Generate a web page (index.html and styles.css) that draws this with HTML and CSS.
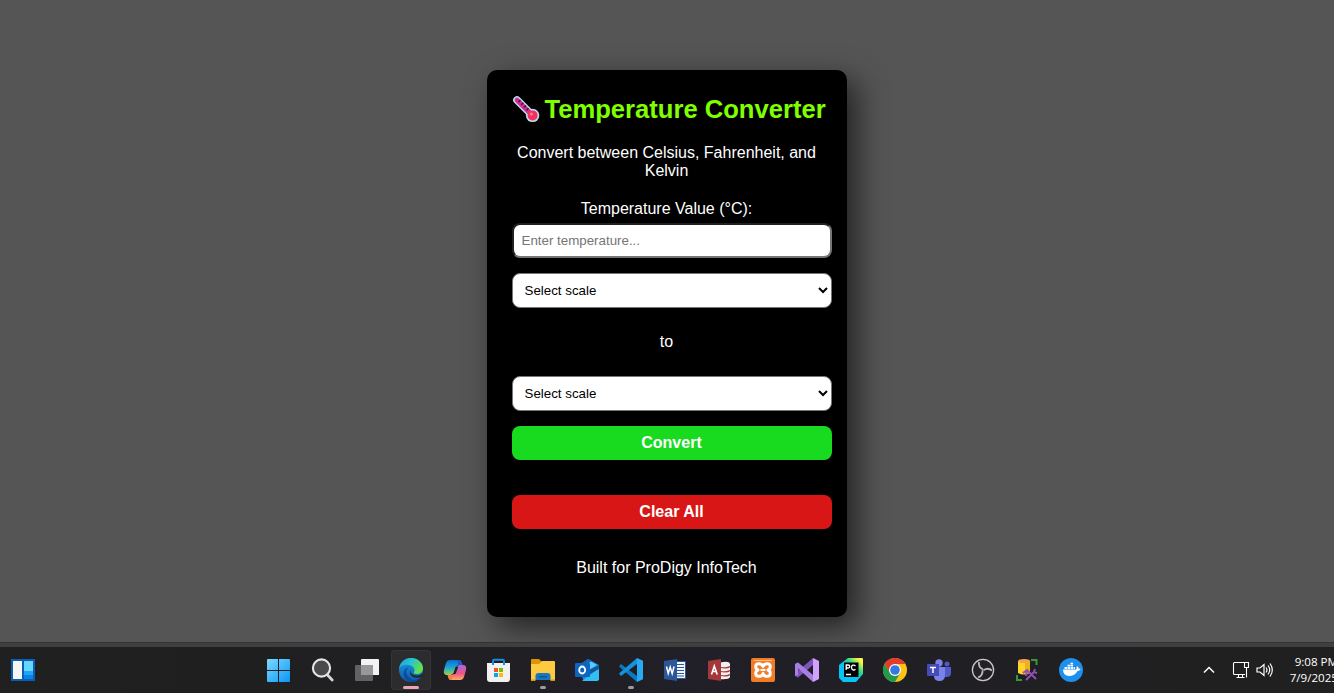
FILE: index.html
```html
<!DOCTYPE html>
<html lang="en">
<head>
<meta charset="utf-8">
<title>Temperature Converter</title>
<link rel="stylesheet" href="styles.css">
</head>
<body>
<main class="page">
  <section class="card">
    <h1 class="title">
      <svg class="thermo" viewBox="0 0 27 27"><path d="M4 4L19 19" stroke="#b9dcf5" stroke-width="7.6" stroke-linecap="round"/><circle cx="19.6" cy="19.4" r="6.7" fill="#b9dcf5"/><path d="M4 4L19 19" stroke="#d62a8a" stroke-width="4.6" stroke-linecap="round"/><circle cx="19.6" cy="19.4" r="5" fill="#f5305c"/><circle cx="18.4" cy="18" r="1.6" fill="#ff7897"/><path d="M6.500 4.500l2-2M9.300 7.300l2-2M12 10l2-2M14.500 12.800l2-2" transform="translate(-1 1.500)" stroke="#321b49" stroke-width="1.500"/></svg>
      <span>Temperature Converter</span>
    </h1>
    <p class="intro">Convert between Celsius, Fahrenheit, and Kelvin</p>
    <label class="label" for="temp">Temperature Value (°C):</label>
    <input class="field" id="temp" type="text" placeholder="Enter temperature...">
    <select class="select"><option>Select scale</option></select>
    <p class="to">to</p>
    <select class="select"><option>Select scale</option></select>
    <button class="btn convert">Convert</button>
    <button class="btn clear">Clear All</button>
    <p class="credit">Built for ProDigy InfoTech</p>
  </section>
</main>
<div class="edge"></div>
<footer class="taskbar">
  <div class="widgets"><svg class="icon" viewBox="0 0 24 24"><path fill="#0a5fb4" d="M0 1h24v22H0z"/><path fill="#f5f5f5" d="M2 3h9v18H2z"/><path fill="#66d5ff" d="M13 3h9v10h-9z"/><path fill="#20a4fa" d="M13 13h9v4h-9z"/><path fill="#0884e8" d="M13 17h9v4h-9z"/></svg></div>
  <nav class="apps">
    <div class="app"><svg class="icon" viewBox="0 0 24 24"><defs><linearGradient id="win" x1="0" y1="0" x2="23" y2="24" gradientUnits="userSpaceOnUse"><stop stop-color="#7fdcff"/><stop offset="1" stop-color="#0a95f5"/></linearGradient></defs><path fill="url(#win)" d="M1 1h10v11H0V2Q0 1 1 1zM12 1h10q1 0 1 1v10H12zM0 13h11v11H1q-1 0-1-1zM12 13h11v10q0 1-1 1H12z"/></svg></div>
    <div class="app"><svg class="icon" viewBox="0 0 24 24"><path d="M16.500 17l4.700 5" stroke="#d3d6da" stroke-width="2.800" stroke-linecap="round"/><circle cx="10.500" cy="10" r="8.600" fill="#4a4a4c" stroke="#e3e5e8" stroke-width="2.100"/></svg></div>
    <div class="app"><svg class="icon" viewBox="0 0 24 24"><path fill="#f2f2f2" d="M7 1h16q1 0 1 1v15H6V2q0-1 1-1z"/><path fill="#626262" d="M1 7h5v10h12v5q0 1-1 1H1q-1 0-1-1V8q0-1 1-1z"/><path fill="#989898" d="M6 7h12v10H6z"/></svg></div>
    <div class="app active"><svg class="icon" viewBox="0 0 24 24"><defs><linearGradient id="eg" x1="0" y1="0" x2="1" y2=".5"><stop stop-color="#1c9de0"/><stop offset=".5" stop-color="#28c4cf"/><stop offset="1" stop-color="#65df4a"/></linearGradient><linearGradient id="eb" x2="0" y2="1"><stop stop-color="#1b9de2"/><stop offset="1" stop-color="#0d56ad"/></linearGradient></defs><circle cx="12" cy="12" r="12" fill="url(#eb)"/><path fill="url(#eg)" d="M0 11C1 4 6 0 12 0c7 0 12 5 12 10 0 4-3 6-6 6s-4-1-3-2 1-6-5-7C5 6 1 8 0 11z"/><path fill="#0b4d95" d="M10 9c-3 2-4 6-1 9.500 4 5 9 4 13 0-2 4-6 6-10 5.500C6 22 4 18 5 14c.5-2.500 2-4.400 5-5z"/><path fill="#252529" d="M11.500 10.500c-1 2 0 5.800 4 6.800 3 .8 5.500.3 8.500-2.300v2.500l-1 1c-4 2-9 1.500-11-1.300-1.400-2.200-1.500-5-.5-6.700z"/></svg><i class="mark wide"></i></div>
    <div class="app"><svg class="icon" viewBox="0 0 24 24"><defs><linearGradient id="ca" x2="0" y2="1"><stop stop-color="#1269d4"/><stop offset=".5" stop-color="#17a9d2"/><stop offset="1" stop-color="#a4cf49"/></linearGradient><linearGradient id="cb" x2="0" y2="1"><stop stop-color="#a568e8"/><stop offset=".55" stop-color="#ee5287"/><stop offset="1" stop-color="#ffac62"/></linearGradient></defs><path fill="url(#ca)" d="M7 2h9q2 0 2.700 2.500l.8 2.500h-3q-3 0-4 3L11 14q-1 3-4 3H4q-4 0-3-5l2-7q1-3 4-3z"/><path fill="url(#cb)" d="M17 7h3q4 0 3 5l-2 7q-1 3-4 3H8q-2 0-2.700-2.500L4.600 17H8q3 0 4-3l1.500-4q1-3 3.500-3z"/><path fill="#211f25" d="M12.500 9h2.800l-2.800 7H9.500q1.300-.5 1.800-2.500z"/><path fill="#1d5ac8" d="M14 2h2q2 0 2.700 2.500l.8 2.500h-3q-2 0-1.500-2.500z"/><path fill="#f58144" d="M4.600 17H8q2 0 1.500 2.500T8 22q-2 0-2.700-2.500z"/></svg></div>
    <div class="app"><svg class="icon" viewBox="0 0 24 24"><path d="M6 6V3q0-1.200 1.200-1.200h8.600Q17 1.800 17 3v3" fill="none" stroke="#148ddb" stroke-width="2"/><path fill="#f1f1f1" d="M0 5h23v16q0 3-3 3H3q-3 0-3-3z"/><path fill="#148ddb" d="M5 5h2v2H5zM16 5h2v2h-2z"/><path fill="#f35325" d="M7 10h4v4H7z"/><path fill="#81bc06" d="M12 10h4v4h-4z"/><path fill="#05a6f0" d="M7 15h4v4H7z"/><path fill="#ffba08" d="M12 15h4v4h-4z"/></svg></div>
    <div class="app"><svg class="icon" viewBox="0 0 24 24"><path fill="#dc9505" d="M1 1h7l3 3v3H0V2q0-1 1-1z"/><path fill="#fdca42" d="M11 3h12q1 0 1 1v18H0V6h8z"/><path fill="#1c76bd" d="M4.500 22v-4q0-3 3-3h9q3 0 3 3v4z"/><path fill="#0f5590" d="M8 18h8v1.500H8z"/><path fill="#d99611" d="M0 21.500h4.500V23H0zM19.500 21.500H24V23h-4.500z"/></svg><i class="mark"></i></div>
    <div class="app"><svg class="icon" viewBox="0 0 24 24"><path fill="#1688d9" d="M5 7l8-6 11 6v15H8z"/><path fill="#57c9fa" d="M8 7l7-4 7 4-8 5z"/><path fill="#1067b3" d="M5 6l8-5 4 2-8 5z"/><path fill="#34bdf1" d="M24 10v11q0 2-2 2H7z"/><path fill="#12579e" d="M14 12l10-5v4l-9 5z"/><path fill="#0c65c0" d="M1 5h13q1 0 1 1v12q0 1-1 1H1q-1 0-1-1V6q0-1 1-1z"/><ellipse cx="7.200" cy="12" rx="3" ry="3.500" fill="none" stroke="#fff" stroke-width="1.800"/></svg></div>
    <div class="app"><svg class="icon" viewBox="0 0 24 24"><path fill="#087bc2" d="M2 6L18 18v6L0 8.500z"/><path fill="#1592dc" d="M2 18L18 6V0L0 15.500z"/><path fill="#29a9f2" d="M18 0l6 2.800v18.400L18 24z"/></svg><i class="mark"></i></div>
    <div class="app"><svg class="icon" viewBox="0 0 24 24"><path fill="#f2f5fa" stroke="#2b579a" d="M12 3.500h10.500v17H12z"/><path stroke="#2b579a" d="M14 6.500h7M14 9.500h7M14 12.500h7M14 15.500h7M14 18h7"/><path fill="#2b579a" d="M1 3l13-2v22L1 21z"/><path d="M3.500 8.500l1.700 7 2-6.500 2 6.500 1.900-7" fill="none" stroke="#fff" stroke-width="1.500"/></svg></div>
    <div class="app"><svg class="icon" viewBox="0 0 24 24"><path fill="#f4eeee" d="M12 5q10-3 11 1v13q-1 3-11 2z"/><path d="M13 9.500q8 1 10-1M13 13.500q8 1 10-1M13 17.500q8 1 10-1" stroke="#a4373a" stroke-width="1.200" fill="none"/><path fill="#a4373a" d="M1 3l13-2v22L1 21z"/><path d="M4.500 16.500L7.300 8l2.900 8.500M5.500 13.500h3.700" fill="none" stroke="#fff" stroke-width="1.600"/></svg></div>
    <div class="app"><svg class="icon" viewBox="0 0 24 24"><rect width="24" height="24" rx="2" fill="#f27b25"/><path stroke="#ffc092" d="M3 2.500h18"/><path d="M12 8.500C10.500 4.500 4.700 5 4.700 8.500c0 2 1 3 2.300 3.500-1.300.5-2.300 1.500-2.300 3.500 0 3.500 5.800 4 7.300 0 1.500 4 7.300 3.500 7.300 0 0-2-1-3-2.300-3.500 1.300-.5 2.300-1.500 2.300-3.500 0-3.500-5.800-4-7.300 0z" fill="none" stroke="#fff" stroke-width="3" stroke-linejoin="round"/><path d="M9.500 12h5" stroke="#fff" stroke-width="2.200"/></svg></div>
    <div class="app"><svg class="icon" viewBox="0 0 24 24"><path fill="#6b459d" d="M0 6l3-1.500 6 5L6 14l-3 3v2.500L0 18z"/><path fill="#8054bc" d="M3 19.500L18 7V0L6 10.500 0 17z"/><path fill="#a77ee1" d="M0 6l3-1.500L18 17v7L8 15 3 10v7l-3 1z"/><path fill="#d0a2fb" d="M18 0l6 3v18l-6 3z"/></svg></div>
    <div class="app"><svg class="icon" viewBox="0 0 24 24"><defs><linearGradient id="pc" x1="0" y1="1" x2="1" y2="0"><stop offset=".45" stop-color="#08c4f6"/><stop offset=".65" stop-color="#22d88f"/><stop offset=".88" stop-color="#fcf243"/></linearGradient></defs><path fill="url(#pc)" d="M9 0h14q1 0 1 1v15l-7 8H4l-4-4V7z"/><path d="M5 4.500h14.500V19H5z"/><path d="M7.200 12V7h1.900c2.200 0 2.200 3 0 3H7.200M16.500 8c-1.700-1.800-4-.8-4 1.500s2.300 3.300 4 1.700M7 16.500h5" fill="none" stroke="#fff" stroke-width="1.300"/></svg></div>
    <div class="app"><svg class="icon" viewBox="0 0 24 24"><circle cx="12" cy="12" r="12" fill="#fbc417"/><path fill="#e33b2e" d="M1.600 6A12 12 0 0 1 22.400 6H12L7 15z"/><path fill="#219a4c" d="M1.600 6A12 12 0 0 0 12 24l5.200-9-5.200 3-5-3z"/><circle cx="12" cy="12" r="6" fill="#fff"/><circle cx="12" cy="12" r="4.800" fill="#3478e5"/></svg></div>
    <div class="app"><svg class="icon" viewBox="0 0 24 24"><circle cx="12" cy="5" r="3.700" fill="#7b83eb"/><circle cx="20" cy="6" r="2.500" fill="#5059c9"/><path fill="#5059c9" d="M16 9h8v6q0 4-4 4h-3z"/><path fill="#7b83eb" d="M7 9h11v8q0 6-5.500 6T7 18z"/><path fill="#454bb7" d="M1 6h11v12H1q-1 0-1-1V7q0-1 1-1z"/><path d="M3 9.500h6M6 9.500V15" stroke="#fff" stroke-width="1.500"/></svg></div>
    <div class="app"><svg class="icon" viewBox="0 0 24 24"><circle cx="12" cy="12" r="10.600" fill="#232124" stroke="#c9c7c9" stroke-width="1.300"/><g fill="none" stroke="#b9b9bd" stroke-width="1.800"><path d="M8 4q-1 5 4 7.500"/><path d="M8 4q-1 5 4 7.500" transform="rotate(120 12 12)"/><path d="M8 4q-1 5 4 7.500" transform="rotate(240 12 12)"/></g></svg></div>
    <div class="app"><svg class="icon" viewBox="0 0 24 24"><path fill="#ffd52d" d="M3 3h12v12q-6 3-12 0z"/><path fill="#e9b613" d="M10 4h5v11l-5 1z"/><ellipse cx="9" cy="3" rx="6" ry="2" fill="#f4a34f"/><path d="M16 2h5.500v5M2 17v5h5" fill="none" stroke="#36983e" stroke-width="2"/><path d="M8 15l4-3 9 9M11 22l9-9M20 11l-1 3 3 1M12 13l-1 5" fill="none" stroke="#9150b8" stroke-width="2"/></svg></div>
    <div class="app"><svg class="icon" viewBox="0 0 24 24"><circle cx="12" cy="12" r="12" fill="#1d90ed"/><path fill="#fff" d="M4 11.500h13q1-1 .5-2.500l.8-.8q1.300 1 1.300 2.300 1.400-.2 2.100.5-.7 2-3.200 2Q16 18 10 18q-6 0-6-6.500zM5.500 9H8v2H5.500zM8.500 9H11v2H8.500zM11.500 9H14v2h-2.500zM8.500 6.700H11v1.800H8.500zM11.500 6.700H14v1.800h-2.500zM11.500 4.800H14v1.500h-2.500zM14.500 9H16v2h-1.500z"/></svg></div>
  </nav>
  <div class="tray">
    <svg class="chevron" viewBox="0 0 12 8"><path d="M1 6.500L6 1.500l5 5" fill="none" stroke="#fff" stroke-width="1.500"/></svg>
    <svg class="network" viewBox="0 0 18 18"><path d="M12 1.500H2.500q-1 0-1 1v10q0 1 1 1H13M4.500 16.500h8M6.500 14v2M10.500 14v2M12.500 1.500h4v5h-4zM14.500 7v9.500" fill="none" stroke="#fff" stroke-width="1.100"/></svg>
    <svg class="sound" viewBox="0 0 18 16"><path d="M1 6v4h3l4 3.500v-11L4 6zM10 5.500q2 2.500 0 5M12 3.500q3.500 4.500 0 9M14 1.500q4.600 6.500 0 13" fill="none" stroke="#fff" stroke-width="1.200"/></svg>
    <div class="clock"><span>9:08 PM</span><span>7/9/2025</span></div>
  </div>
</footer>
</body>
</html>
```

FILE: styles.css
```css
* { box-sizing: border-box; }
body {
  margin: 0;
  width: 1334px;
  height: 693px;
  overflow: hidden;
  background: #555;
  font-family: "Liberation Sans", Arial, sans-serif;
}
.page {
  width: 1333px;
  height: 642px;
  padding-top: 70px;
  overflow: hidden;
}
.card {
  display: flex;
  flex-direction: column;
  width: 360px;
  height: 547px;
  margin: 0 auto;
  padding: 22px 25px 0;
  border-radius: 10px;
  background: #000;
  color: #fff;
  text-align: center;
  font-size: 16px;
  line-height: 18px;
  box-shadow: 10px 10px 30px rgba(0, 0, 0, .6);
}
.title {
  display: flex;
  align-items: center;
  gap: 5px;
  height: 34px;
  margin: 0;
  padding-left: 1px;
  color: #7fff00;
  font-size: 25.6px;
  line-height: 34px;
  white-space: nowrap;
}
.thermo { flex: none; width: 27px; height: 27px; }
.intro { margin: 18px 0 20px; }
.label { display: block; }
.field {
  width: 320px;
  height: 35px;
  margin: 5px 0 15px;
  padding: 0 8px;
  border: 2px inset #767676;
  border-radius: 8px;
  background: #fff;
  font: 13.333px "Liberation Sans", Arial, sans-serif;
}
.select {
  width: 320px;
  height: 35px;
  padding: 8px;
  border: 1px solid #767676;
  border-radius: 8px;
  background: #fff;
  color: #000;
  font: 13.333px "Liberation Sans", Arial, sans-serif;
}
.to { margin: 25px 0 25px; }
.btn {
  width: 320px;
  height: 34px;
  margin: 15px 0 0;
  padding: 0;
  border: 0;
  border-radius: 8px;
  color: #fff;
  font: bold 16px "Liberation Sans", Arial, sans-serif;
}
.convert { background: #18db1f; }
.clear { margin-top: 35px; background: #d91616; }
.credit { margin: 30px 0 0; }
.edge {
  height: 5px;
  border-top: 1px solid #333;
  background: #3f3f3f;
}
.taskbar {
  display: flex;
  height: 46px;
  background: linear-gradient(90deg, #202020 0, #201f20 250px, #211f27 700px, #201f22 1050px, #202020 1250px);
}
.icon { display: block; width: 24px; height: 24px; }
.widgets { width: 257px; padding: 11px 0 0 11px; }
.apps { display: flex; width: 836px; }
.app {
  display: flex;
  flex-direction: column;
  align-items: center;
  flex: 0 0 40px;
  height: 40px;
  margin: 3px 2px 0;
  padding-top: 8px;
  border-radius: 4px;
}
.active { background: #2c2c2f; box-shadow: inset 0 0 0 1px #353538; }
.mark { width: 6px; height: 3px; margin-top: 4px; border-radius: 2px; background: #9b9b9f; }
.wide { width: 16px; background: #e9a6b5; }
.tray {
  display: flex;
  align-items: center;
  width: 241px;
  padding-left: 110px;
}
.chevron { flex: none; width: 12px; height: 8px; }
.network { flex: none; width: 18px; height: 18px; margin-left: 17px; }
.sound { flex: none; width: 18px; height: 16px; margin-left: 6px; }
.clock {
  display: flex;
  flex: none;
  flex-direction: column;
  align-items: flex-end;
  width: 64px;
  color: #fff;
  font: 11.6px/16px "Open Sans", "Noto Sans", sans-serif;
}
```
